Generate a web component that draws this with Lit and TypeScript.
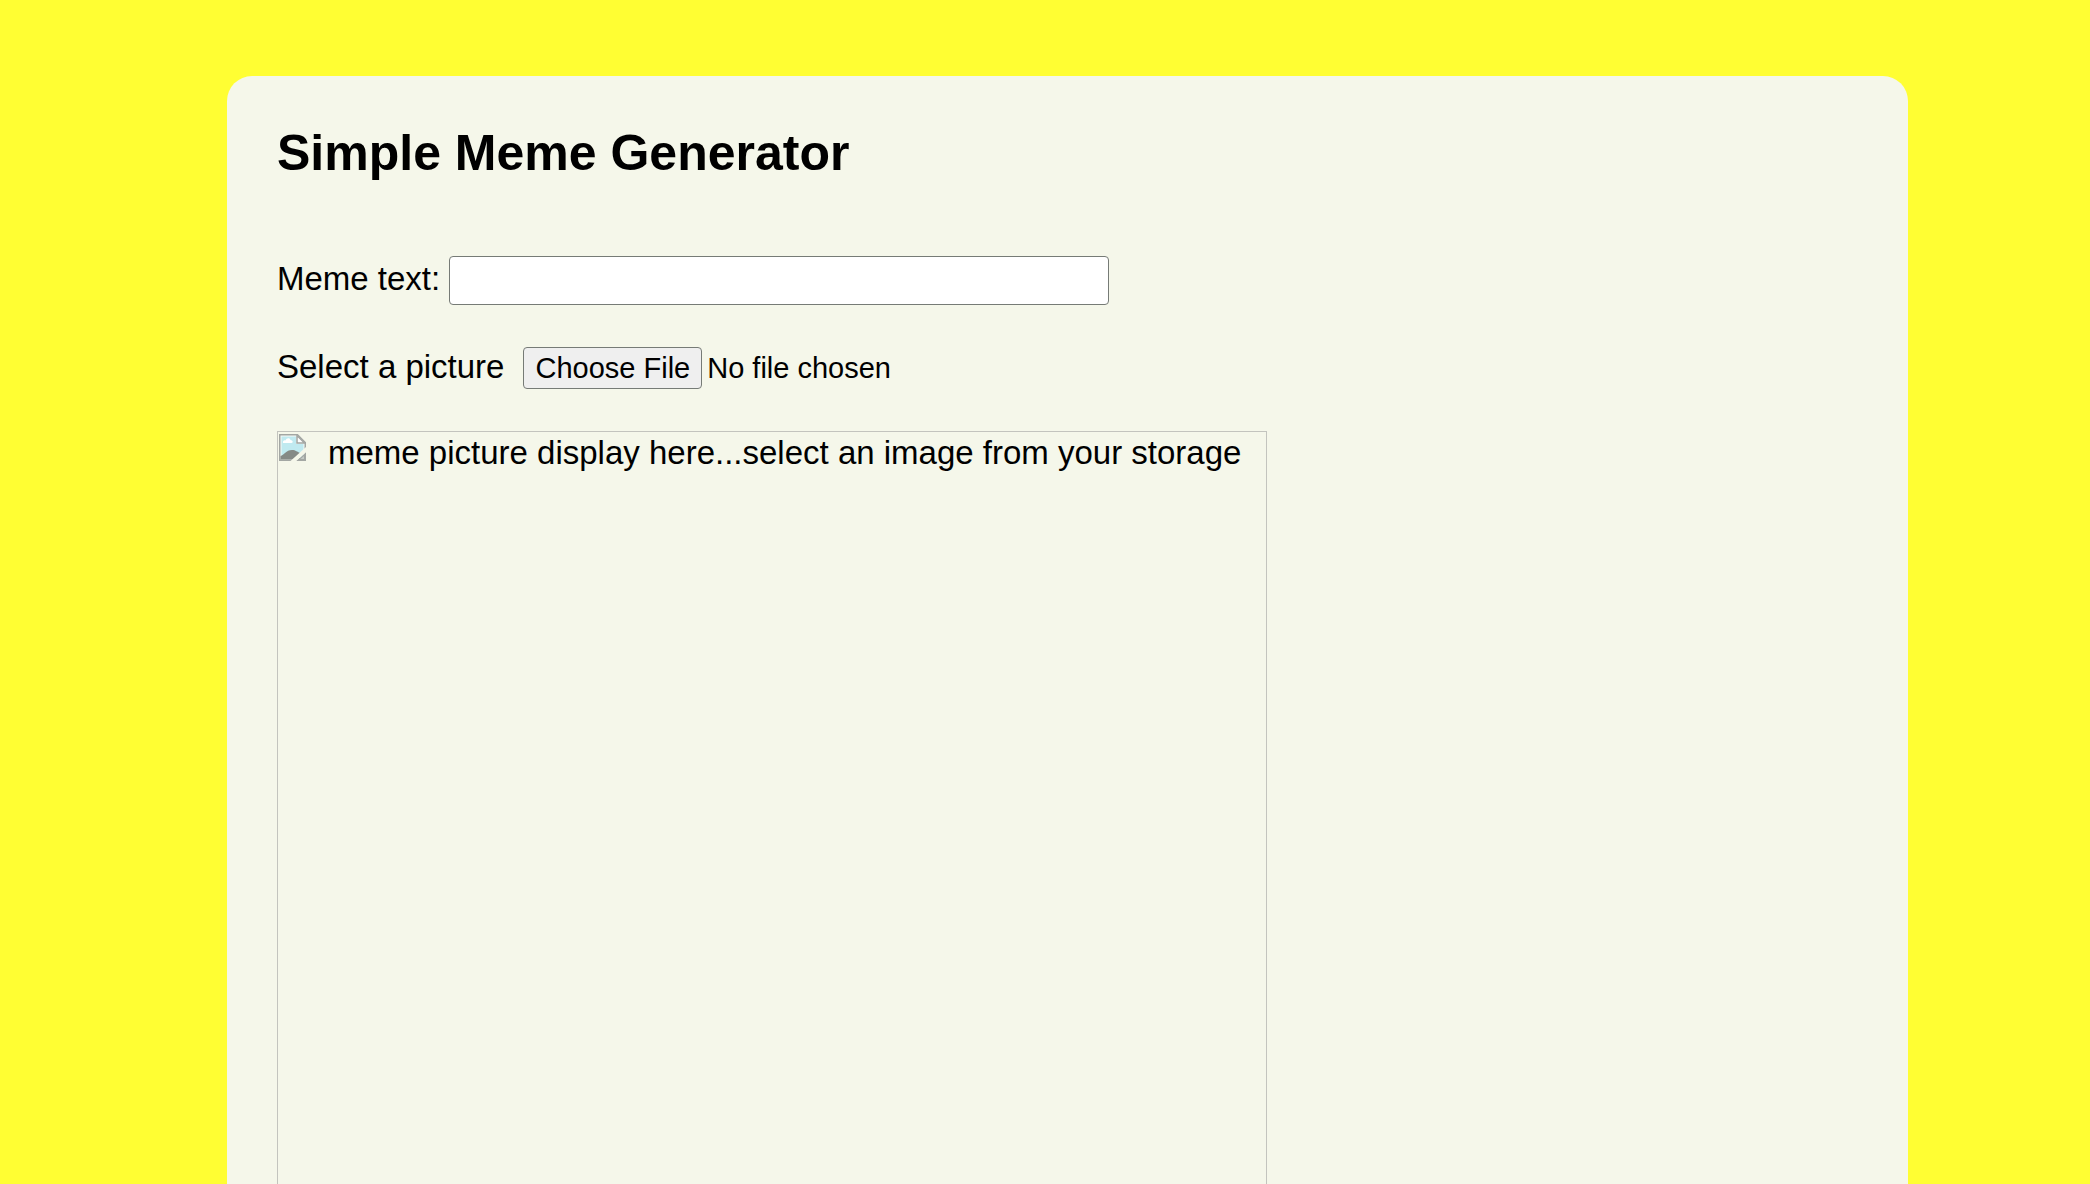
import { LitElement, html, css, svg } from "lit";
import { customElement, state } from "lit/decorators.js";

const brokenPicture = svg`
  <path d="M0.750 0.750H18.500L26.250 8.500V26.250H0.750Z" fill="#f6faf6" stroke="#a3a7a3" stroke-width="1.500" />
  <path d="M2.500 2.500H17V10H24.500V24.500H2.500Z" fill="#c0eaf0" />
  <path d="M4 9C3.500 7 5 6 6.500 6.500C7.500 3.500 11 3.500 11.500 6C14 6 14.500 9 12.500 9Z" fill="#ffffff" />
  <path d="M1.500 25.500V22C5 21 7 16 13 16C17 16 18 18 21 19V25.500Z" fill="#858a86" />
  <path d="M18 1.500V9H25.500Z" fill="#ffffff" stroke="#a3a7a3" stroke-width="1.500" />
  <path d="M11.500 27L27.500 12.500V18L17.500 27Z" fill="#f5f7ea" />
  <path d="M17.500 27L27 18.500V27Z" fill="#a3a7a3" />
  <path d="M21.500 25L25 22V25Z" fill="#c4cac5" />
`;

@customElement("app-root")
export class AppRoot extends LitElement {
  @state() private caption = "";
  @state() private picture = "";

  static styles = css`
    :host {
      display: block;
      box-sizing: border-box;
      height: 100vh;
      overflow: hidden;
      padding: 76px 182px 0 227px;
      background: #fffe33;
      color: #000;
      font: 33px/38px "Liberation Sans", Arial, sans-serif;
    }
    .card {
      display: flex;
      flex-direction: column;
      gap: 42px;
      padding: 47px 50px;
      border-radius: 25px;
      background: #f5f7ea;
    }
    h1 {
      margin: 0 0 31px;
      font-size: 50px;
      line-height: 60px;
    }
    .row {
      display: flex;
      align-items: baseline;
      gap: 9px;
    }
    .row.file {
      gap: 19px;
    }
    input {
      font: 29px/33px "Liberation Sans", Arial, sans-serif;
      color: #000;
    }
    .caption {
      box-sizing: border-box;
      width: 660px;
      max-width: 100%;
      height: 49px;
      margin: 0;
      padding: 2px 4px;
      border: 1px solid #767b76;
      border-radius: 4px;
      background: #fff;
    }
    .picker {
      width: 600px;
      height: 42px;
      margin: 0;
      padding: 0;
    }
    .picker::file-selector-button {
      box-sizing: border-box;
      height: 42px;
      margin: 0 5px 0 0;
      padding: 0 11px;
      border: 1px solid #767b76;
      border-radius: 4px;
      background: #efefef;
      color: #000;
      font: inherit;
    }
    .frame {
      box-sizing: border-box;
      display: flex;
      align-items: flex-start;
      gap: 22px;
      width: 990px;
      max-width: 100%;
      aspect-ratio: 1;
      margin: 0;
      padding: 2px 1px;
      border: 1px solid #c3c4be;
    }
    .icon {
      flex: none;
      width: 27px;
      height: 27px;
    }
    .picture {
      width: 100%;
      height: 100%;
      object-fit: contain;
    }
  `;

  private onCaption(e: Event) {
    this.caption = (e.target as HTMLInputElement).value;
  }

  private onPick(e: Event) {
    const file = (e.target as HTMLInputElement).files?.[0];
    this.picture = file ? URL.createObjectURL(file) : "";
  }

  render() {
    return html`
      <main class="card">
        <h1>Simple Meme Generator</h1>
        <div class="row">
          <label for="caption">Meme text:</label>
          <input class="caption" id="caption" type="text" .value=${this.caption} @input=${this.onCaption} />
        </div>
        <div class="row file">
          <label for="picker">Select a picture</label>
          <input class="picker" id="picker" type="file" accept="image/*" @change=${this.onPick} />
        </div>
        <figure class="frame">
          ${this.picture
            ? html`<img class="picture" src=${this.picture} alt=${this.caption} />`
            : html`<svg class="icon" viewBox="0 0 27 27" aria-hidden="true">${brokenPicture}</svg>
                <span>meme picture display here...select an image from your storage</span>`}
        </figure>
      </main>
    `;
  }
}
